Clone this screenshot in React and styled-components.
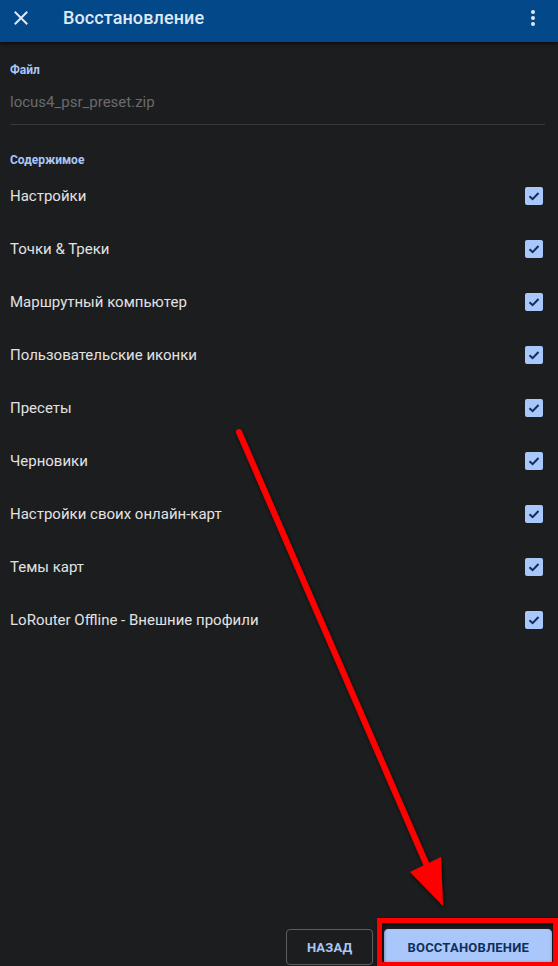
import React from "react";
import styled, { createGlobalStyle } from "styled-components";

const Global = createGlobalStyle`
  html, body { margin: 0; padding: 0; background: #1c1d1f; }
  body { font-family: Roboto, "Noto Sans", sans-serif; overflow: hidden; }
  * { box-sizing: border-box; }
`;

const Page = styled.div`
  position: relative;
  width: 558px;
  height: 966px;
  display: flex;
  flex-direction: column;
  background: #1c1d1f;
  overflow: hidden;
`;

const Header = styled.header`
  height: 42px;
  flex: none;
  display: flex;
  align-items: flex-start;
  padding-top: 4px;
  background: #03498a;
  box-shadow: 0 2px 3px rgba(0, 0, 0, 0.55);
  color: #dfe8f5;
  position: relative;
  z-index: 1;
`;

const IconButton = styled.div`
  width: ${(p) => p.$w}px;
  height: 27px;
  display: flex;
  align-items: center;
  justify-content: center;
  flex: none;
`;

const Title = styled.h1`
  margin: 0;
  flex: 1;
  font-size: 18px;
  line-height: 27px;
  font-weight: 500;
  letter-spacing: 0.1px;
  padding-left: 21px;
`;

const Content = styled.main`
  flex: 1;
  padding: 20px 13px 0 10px;
  display: flex;
  flex-direction: column;
`;

const SectionLabel = styled.div`
  font-size: 12px;
  line-height: 16px;
  font-weight: 700;
  color: #a9c7f7;
  margin-top: ${(p) => p.$mt || 0}px;
`;

const FileName = styled.div`
  font-size: 15px;
  line-height: 20px;
  color: #6a6b6d;
  margin-top: 14px;
  padding-bottom: 12px;
  border-bottom: 1px solid #38393b;
`;

const List = styled.div`
  display: flex;
  flex-direction: column;
  margin-top: 2px;
`;

const Row = styled.label`
  height: 52.9px;
  display: flex;
  align-items: center;
  justify-content: space-between;
  font-size: 15px;
  color: #e2e2e3;
`;

const Check = styled.span`
  width: 18px;
  height: 18px;
  border-radius: 2px;
  background: #a9c7fb;
  display: flex;
  align-items: center;
  justify-content: center;
  margin-right: 2px;
`;

const Footer = styled.footer`
  display: flex;
  justify-content: flex-end;
  gap: 11px;
  padding: 0 6px 0 0;
  height: 37px;
  align-items: flex-start;
`;

const Button = styled.button`
  height: 36px;
  padding: 0 ${(p) => p.$px}px;
  border-radius: 4px;
  font-family: Roboto, "Noto Sans", sans-serif;
  font-size: 13px;
  font-weight: 700;
  letter-spacing: 0.2px;
  border: 1px solid ${(p) => (p.$primary ? "#a9c7fb" : "#5c5d60")};
  background: ${(p) => (p.$primary ? "#a9c7fb" : "transparent")};
  color: ${(p) => (p.$primary ? "#0f2e5c" : "#a9c7f7")};
`;

const Overlay = styled.svg`
  position: absolute;
  left: 0;
  top: 0;
  pointer-events: none;
  z-index: 2;
`;

const items = [
  "Настройки",
  "Точки & Треки",
  "Маршрутный компьютер",
  "Пользовательские иконки",
  "Пресеты",
  "Черновики",
  "Настройки своих онлайн-карт",
  "Темы карт",
  "LoRouter Offline - Внешние профили",
];

export default function App() {
  return (
    <>
      <Global />
      <Page>
        <Header>
          <IconButton $w={42}>
            <svg width="14" height="14" viewBox="0 0 14 14">
              <path d="M1.5 1.5 L12.5 12.5 M12.5 1.5 L1.5 12.5" stroke="#dfe8f5" strokeWidth="2" strokeLinecap="square" />
            </svg>
          </IconButton>
          <Title>Восстановление</Title>
          <IconButton $w={50}>
            <svg width="6" height="18" viewBox="0 0 6 18">
              <circle cx="3" cy="3" r="2" fill="#dfe8f5" />
              <circle cx="3" cy="9" r="2" fill="#dfe8f5" />
              <circle cx="3" cy="15" r="2" fill="#dfe8f5" />
            </svg>
          </IconButton>
        </Header>
        <Content>
          <SectionLabel>Файл</SectionLabel>
          <FileName>locus4_psr_preset.zip</FileName>
          <SectionLabel $mt={27}>Содержимое</SectionLabel>
          <List>
            {items.map((t) => (
              <Row key={t}>
                <span>{t}</span>
                <Check>
                  <svg width="14" height="14" viewBox="0 0 14 14">
                    <path d="M2.5 7.2 L5.6 10.2 L11.5 4" fill="none" stroke="#0f2e5c" strokeWidth="2" />
                  </svg>
                </Check>
              </Row>
            ))}
          </List>
        </Content>
        <Footer>
          <Button $px={20}>НАЗАД</Button>
          <Button $primary $px={22}>ВОССТАНОВЛЕНИЕ</Button>
        </Footer>
        <Overlay width="558" height="966" viewBox="0 0 558 966">
          <defs>
            <filter id="sh" x="-20%" y="-20%" width="140%" height="140%">
              <feDropShadow dx="1" dy="2" stdDeviation="2" floodColor="#000" floodOpacity="0.7" />
            </filter>
          </defs>
          <g filter="url(#sh)">
            <line x1="239" y1="432" x2="428" y2="868" stroke="#ff0000" strokeWidth="6" strokeLinecap="round" />
            <polygon points="443,906 410,872 441,857" fill="#ff0000" />
            <rect x="379.5" y="920.5" width="176" height="44" fill="none" stroke="#ff0000" strokeWidth="5" />
          </g>
        </Overlay>
      </Page>
    </>
  );
}
